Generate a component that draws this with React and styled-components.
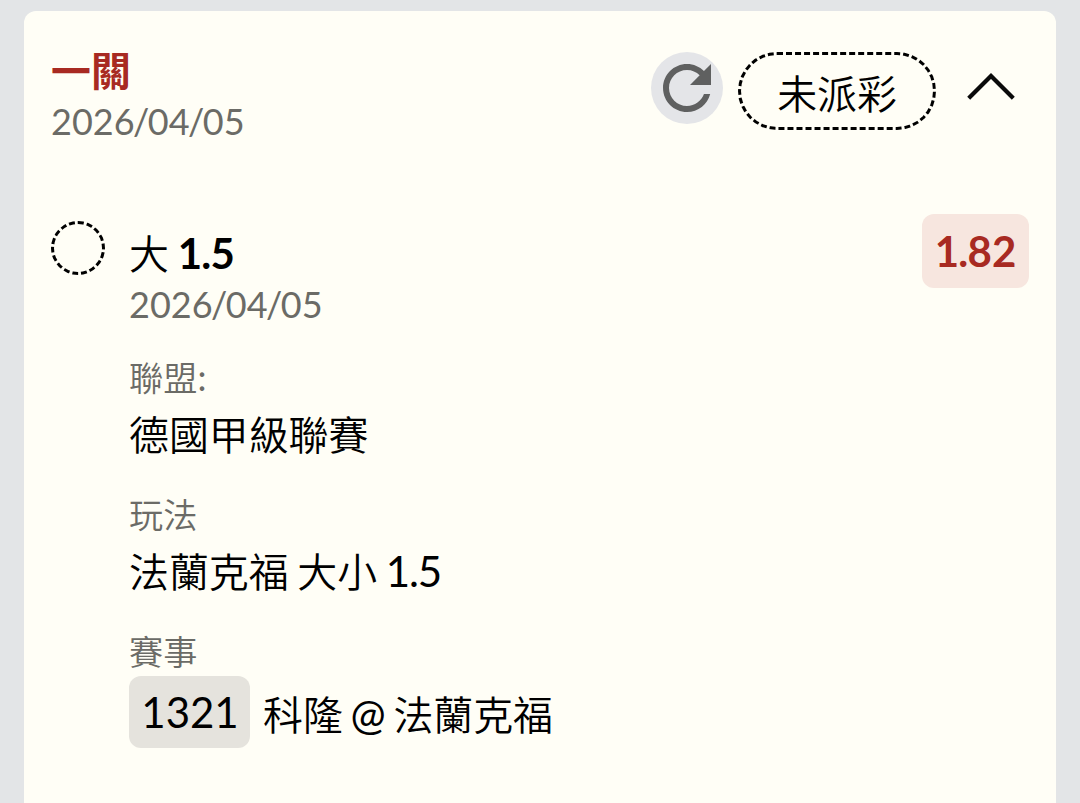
import React from 'react';
import styled, { createGlobalStyle } from 'styled-components';

const BetDate = () => (
  <DateText>2026<Slash>/</Slash>04<Slash>/</Slash>05</DateText>
)

const App = () => {
  return (
    <>
      <GlobalStyle />
      <Card>
        <Header>
          <HeaderInfo>
            <Title><Han $bold>一關</Han></Title>
            <BetDate />
          </HeaderInfo>
          <Actions>
            <RefreshButton>
              <svg width="72" height="72" viewBox="0 0 24 24" fill="#5f6060">
                <path d="M17.65 6.35C16.2 4.9 14.21 4 12 4c-4.42 0-7.99 3.58-7.99 8s3.57 8 7.99 8c3.73 0 6.84-2.55 7.73-6h-2.08c-.82 2.33-3.04 4-5.65 4-3.31 0-6-2.69-6-6s2.69-6 6-6c1.66 0 3.14.69 4.22 1.78L13 11h7V4l-2.35 2.35z" />
              </svg>
            </RefreshButton>
            <Status><Han>未派彩</Han></Status>
            <Toggle>
              <svg width="48" height="30" viewBox="0 0 48 30" fill="none" stroke="#0a0a0a" strokeWidth="4.2">
                <path d="M1.7 26.3L24 4L46.3 26.3" />
              </svg>
            </Toggle>
          </Actions>
        </Header>
        <Bet>
          <Marker />
          <Details>
            <Pick><Han>大</Han> <b>1<Point $bold>.</Point>5</b></Pick>
            <BetDate />
            <Field>
              <Label><Han>聯盟</Han>:</Label>
              <Value><Han>德國甲級聯賽</Han></Value>
            </Field>
            <Field>
              <Label><Han>玩法</Han></Label>
              <Value><Han>法蘭克福</Han> <Han>大小</Han> 1<Point>.</Point>5</Value>
            </Field>
            <Field>
              <Label><Han>賽事</Han></Label>
              <Match>
                <MatchCode>1321</MatchCode>
                <Teams><Han>科隆</Han> @ <Han>法蘭克福</Han></Teams>
              </Match>
            </Field>
          </Details>
          <Odds>1<Point $bold>.</Point>82</Odds>
        </Bet>
      </Card>
    </>
  )
}

const GlobalStyle = createGlobalStyle`
    * {
        box-sizing: border-box;
    }
    body {
        margin: 0;
        height: 803px;
        overflow: hidden;
        background-color: #e3e5e7;
        color: #000;
        font-family: Lato, 'Noto Sans CJK TC', sans-serif;
        font-size: 42px;
        word-spacing: -2px;
    }
    svg {
        display: block;
    }
`

const Card = styled.div`
    height: 812px;
    margin: 11px 24px 0;
    padding: 32px 27px 0;
    border-radius: 12px;
    background-color: #fffef6;
`

/* Chinese glyphs run slightly smaller than the Latin text beside them */
const Han = styled.span`
    font-family: 'Noto Sans CJK TC', sans-serif;
    font-size: 0.95em;
    font-weight: ${({ $bold }) => ($bold ? 700 : 350)};
    line-height: 0;
`

/* tighter punctuation between digits */
const Slash = styled.span`
    margin: 0 -0.042em;
`

const Point = styled.span`
    margin: 0 ${({ $bold }) => ($bold ? '-0.018em' : '-0.03em')};
`

const Header = styled.div`
    display: flex;
    justify-content: space-between;
    height: 171px;
`

const HeaderInfo = styled.div`
    display: flex;
    flex-direction: column;
`

const Title = styled.div`
    line-height: 54px;
    color: #a82a22;
`

const DateText = styled.div`
    font-size: 36px;
    line-height: 48px;
    color: #6b6b66;
`

const Actions = styled.div`
    display: flex;
    align-items: flex-start;
    padding-top: 9px;
`

const RefreshButton = styled.div`
    width: 72px;
    height: 72px;
    margin-right: 15px;
    border-radius: 50%;
    background-color: #e4e5e8;
`

const Status = styled.div`
    width: 198px;
    height: 78px;
    border: 3px dashed #000;
    border-radius: 39px;
    line-height: 76px;
    text-align: center;
`

const Toggle = styled.div`
    margin: 20px 14px 0 31px;
`

const Bet = styled.div`
    display: flex;
    align-items: flex-start;
`

const Marker = styled.div`
    width: 54px;
    height: 54px;
    margin: 7px 24px 0 0;
    border: 3px dashed #000;
    border-radius: 50%;
`

const Details = styled.div`
    flex: 1;
    padding-top: 12px;
`

const Pick = styled.div`
    line-height: 54px;
`

const Field = styled.div`
    margin-top: 25px;
`

const Label = styled.div`
    font-size: 36px;
    line-height: 48px;
    color: #6b6b66;
`

const Value = styled.div`
    padding-top: 2px;
    line-height: 62px;
`

const Match = styled.div`
    display: flex;
    gap: 13px;
    margin-top: 1px;
`

const MatchCode = styled.div`
    width: 121px;
    height: 72px;
    border-radius: 12px;
    padding-left: 1px;
    background-color: #e5e3dd;
    line-height: 72px;
    text-align: center;
`

const Teams = styled.div`
    line-height: 76px;
    word-spacing: -3px;
`

const Odds = styled.div`
    width: 107px;
    height: 74px;
    border-radius: 12px;
    background-color: #f7e6df;
    color: #a82a22;
    font-weight: 700;
    line-height: 74px;
    text-align: center;
`

export default App
